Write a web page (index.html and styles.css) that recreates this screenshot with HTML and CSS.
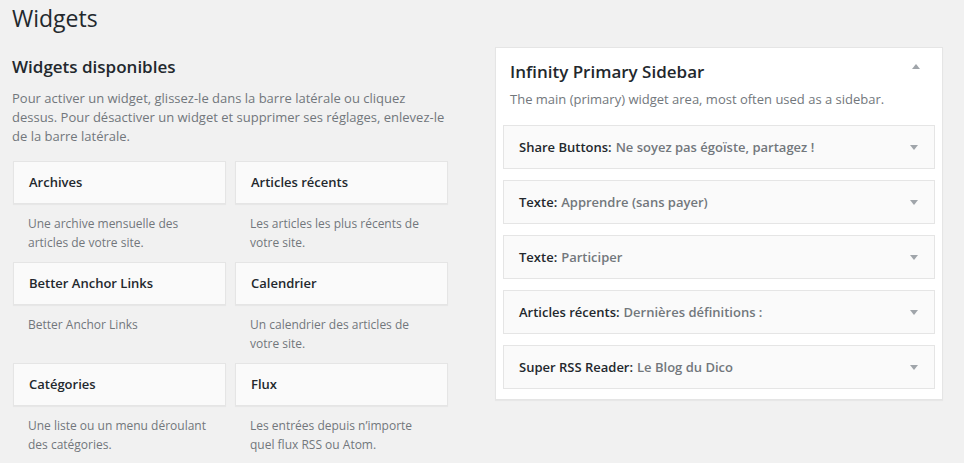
FILE: index.html
```html
<!DOCTYPE html>
<html lang="fr">
<head>
    <meta charset="UTF-8">
    <meta name="viewport" content="width=device-width, initial-scale=1.0">
    <title>Widgets</title>
    <link rel="stylesheet" href="styles.css">
</head>
<body>

    <div class="wrap">
        <h1>Widgets</h1>

        <div class="columns">
            <div class="available">
                <h2>Widgets disponibles</h2>
                <p class="intro">Pour activer un widget, glissez-le dans la barre latérale ou cliquez dessus. Pour désactiver un widget et supprimer ses réglages, enlevez-le de la barre latérale.</p>

                <div class="widget-list">
                    <div class="widget">
                        <div class="widget-top">Archives</div>
                        <div class="widget-desc">Une archive mensuelle des articles de votre site.</div>
                    </div>
                    <div class="widget">
                        <div class="widget-top">Articles récents</div>
                        <div class="widget-desc">Les articles les plus récents de votre site.</div>
                    </div>
                    <div class="widget">
                        <div class="widget-top">Better Anchor Links</div>
                        <div class="widget-desc">Better Anchor Links</div>
                    </div>
                    <div class="widget">
                        <div class="widget-top">Calendrier</div>
                        <div class="widget-desc">Un calendrier des articles de votre site.</div>
                    </div>
                    <div class="widget">
                        <div class="widget-top">Catégories</div>
                        <div class="widget-desc">Une liste ou un menu déroulant des catégories.</div>
                    </div>
                    <div class="widget">
                        <div class="widget-top">Flux</div>
                        <div class="widget-desc">Les entrées depuis n’importe quel flux RSS ou Atom.</div>
                    </div>
                </div>
            </div>

            <div class="sidebar">
                <div class="sidebar-head">
                    <h2>Infinity Primary Sidebar</h2>
                    <span class="arrow up"></span>
                </div>
                <p class="sidebar-desc">The main (primary) widget area, most often used as a sidebar.</p>

                <div class="sidebar-item"><span class="name">Share Buttons:</span> <span class="in-title">Ne soyez pas égoïste, partagez !</span><span class="arrow down"></span></div>
                <div class="sidebar-item"><span class="name">Texte:</span> <span class="in-title">Apprendre (sans payer)</span><span class="arrow down"></span></div>
                <div class="sidebar-item"><span class="name">Texte:</span> <span class="in-title">Participer</span><span class="arrow down"></span></div>
                <div class="sidebar-item"><span class="name">Articles récents:</span> <span class="in-title">Dernières définitions :</span><span class="arrow down"></span></div>
                <div class="sidebar-item"><span class="name">Super RSS Reader:</span> <span class="in-title">Le Blog du Dico</span><span class="arrow down"></span></div>
            </div>
        </div>
    </div>

</body>
</html>
```

FILE: styles.css
```css
body {
    margin: 0;
    background-color: #f1f1f1;
    color: #23282d;
    font-family: "Open Sans", sans-serif;
    font-size: 13px;
}
.wrap {
    padding: 0 21px 0 12px;
}
h1 {
    margin: 3px 0 0;
    font-size: 23px;
    font-weight: 400;
    line-height: 30px;
}
.columns {
    display: flex;
    align-items: flex-start;
}
.available {
    width: 436px;
}
.available h2, .sidebar-head h2 {
    margin: 22px 0 0;
    font-size: 17px;
    font-weight: 600;
    line-height: 24px;
}
.intro {
    margin: 10px 0 0;
    color: #72777c;
    line-height: 19px;
}
.widget-list {
    display: grid;
    grid-template-columns: 1fr 1fr;
    column-gap: 9px;
    margin-top: 15px;
    padding-left: 1px;
}
.widget-top {
    padding: 15px;
    background-color: #fafafa;
    border: 1px solid #e5e5e5;
    box-shadow: 0 1px 1px rgba(0, 0, 0, 0.04);
    font-weight: 600;
    line-height: 11px;
}
.widget-desc {
    height: 38px;
    padding: 10px 15px;
    color: #72777c;
    font-size: 12px;
    line-height: 19px;
}
.sidebar {
    width: 432px;
    margin: 14px 0 0 auto;
    padding: 0 7px 10px;
    background-color: #fff;
    border: 1px solid #e5e5e5;
    box-shadow: 0 1px 1px rgba(0, 0, 0, 0.04);
}
.sidebar-head {
    display: flex;
    align-items: center;
    justify-content: space-between;
    padding: 0 15px 0 7px;
}
.sidebar-head h2 {
    margin-top: 12px;
}
.sidebar-desc {
    margin: 6px 0 0 7px;
    color: #72777c;
    line-height: 19px;
}
.sidebar-item {
    display: flex;
    align-items: center;
    margin-top: 11px;
    padding: 15px 15px;
    background-color: #fafafa;
    border: 1px solid #e5e5e5;
    font-weight: 600;
    line-height: 12px;
}
.sidebar-desc + .sidebar-item {
    margin-top: 16px;
}
.sidebar-item .name {
    white-space: pre;
}
.in-title {
    margin-left: 4px;
    color: #72777c;
}
.arrow {
    width: 0;
    height: 0;
    border-left: 4px solid transparent;
    border-right: 4px solid transparent;
}
.arrow.up {
    border-bottom: 5px solid #a0a5aa;
}
.arrow.down {
    margin-left: auto;
    margin-right: 1px;
    border-top: 5px solid #a0a5aa;
}
```
